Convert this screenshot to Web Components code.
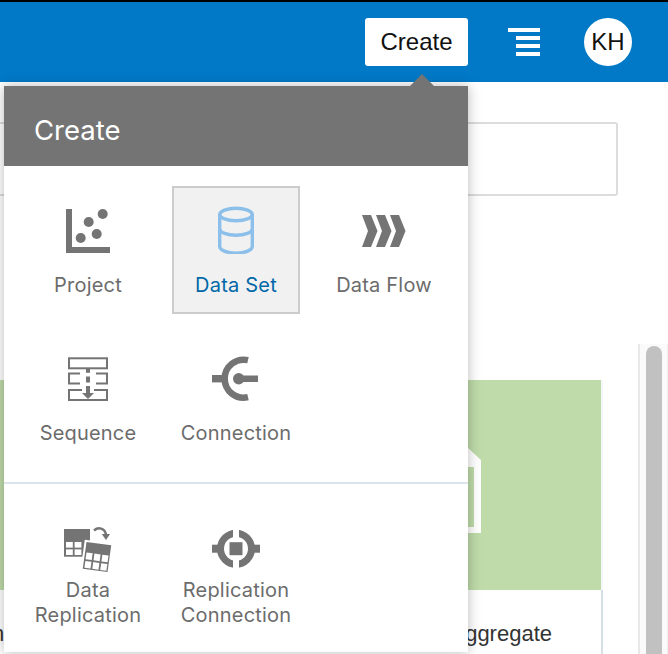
<!DOCTYPE html>
<html>
<head>
<meta charset="utf-8">
<title>Create menu</title>
<style>
    html, body { margin: 0; height: 100%; overflow: hidden; background: #fff; }
</style>
</head>
<body>
<app-shell>
    <top-bar slot="bar"></top-bar>
    <search-box></search-box>
    <card-row>
        <item-card name="n" class="first"></item-card>
        <item-card name="Aggregate" doc></item-card>
    </card-row>
    <create-menu slot="menu">
        <menu-section>
            <menu-tile label="Project">
                <svg viewBox="0 0 48 48" fill="#747474">
                    <rect x="2" y="3" width="6" height="44"/><rect x="2" y="41" width="44" height="6"/>
                    <circle cx="38.7" cy="8" r="5"/><circle cx="24.7" cy="16" r="5"/>
                    <circle cx="32.7" cy="28" r="5"/><circle cx="16.7" cy="32" r="5"/>
                </svg>
            </menu-tile>
            <menu-tile label="Data Set" selected>
                <svg viewBox="0 0 48 48" fill="none" stroke="#8cc0ea" stroke-width="3.4">
                    <ellipse cx="24" cy="8.5" rx="16.3" ry="6.3"/>
                    <path d="M7.7 8.5V40.5C7.7 44 15 47.2 24 47.2S40.3 44 40.3 40.5V8.5"/>
                    <path d="M7.7 23C7.7 26.5 15 29.2 24 29.2S40.3 26.5 40.3 23"/>
                </svg>
            </menu-tile>
            <menu-tile label="Data Flow">
                <svg viewBox="0 0 48 48" fill="#747474">
                    <path d="M2 9H11L17.5 25 11 41H2L8 25Z"/>
                    <path d="M16 9H25L31.5 25 25 41H16L22 25Z"/>
                    <path d="M30 9H39L45.5 25 39 41H30L36 25Z"/>
                </svg>
            </menu-tile>
            <menu-tile label="Sequence">
                <svg viewBox="0 0 48 48" fill="none" stroke="#747474" stroke-width="2">
                    <rect x="5" y="4.3" width="38" height="10"/>
                    <path d="M16 19.5H5V29.5H16M32 19.5H43V29.5H32"/>
                    <path d="M18 36H5V46H43V36H30"/>
                    <g fill="#747474" stroke="none">
                        <rect x="22" y="14.3" width="4" height="4.5"/>
                        <rect x="22" y="22.5" width="4" height="6"/>
                        <rect x="22" y="32" width="4" height="8"/>
                        <path d="M18 39H30L24 45Z"/>
                    </g>
                </svg>
            </menu-tile>
            <menu-tile label="Connection">
                <svg viewBox="0 0 48 48" fill="#747474">
                    <path d="M36 6.2A19 19 0 1 0 36 43.2" fill="none" stroke="#747474" stroke-width="6.5"/>
                    <rect x="0" y="21" width="10" height="7.4"/>
                    <circle cx="26.7" cy="24.7" r="5.7"/>
                    <rect x="26.7" y="21.5" width="19.3" height="6.5"/>
                </svg>
            </menu-tile>
        </menu-section>
        <menu-section divided>
            <menu-tile label="Data Replication" tight>
                <svg viewBox="0 0 48 48">
                    <rect x="0" y="4" width="26" height="27.7" fill="#747474"/>
                    <g fill="#fff">
                        <rect x="2" y="17" width="6.8" height="5.6"/><rect x="10.6" y="17" width="6.8" height="5.6"/>
                        <rect x="2" y="24.4" width="6.8" height="5.6"/><rect x="10.6" y="24.4" width="6.8" height="5.6"/>
                    </g>
                    <g transform="rotate(8 33 32)">
                        <rect x="19.5" y="17.5" width="27" height="29" fill="#747474" stroke="#fff" stroke-width="2"/>
                        <g fill="#fff">
                            <rect x="22" y="29" width="6.2" height="6.8"/><rect x="30" y="29" width="6.2" height="6.8"/><rect x="38" y="29" width="6.2" height="6.8"/>
                            <rect x="22" y="37.5" width="6.2" height="6.8"/><rect x="30" y="37.5" width="6.2" height="6.8"/><rect x="38" y="37.5" width="6.2" height="6.8"/>
                        </g>
                    </g>
                    <path d="M30 5.5C34 2 41 2.5 42 10" fill="none" stroke="#747474" stroke-width="2.5"/>
                    <path d="M37.7 9H46L42 15Z" fill="#747474"/>
                </svg>
            </menu-tile>
            <menu-tile label="Replication Connection" tight>
                <svg viewBox="0 0 48 48" fill="#747474">
                    <circle cx="24" cy="23.7" r="15.5" fill="none" stroke="#747474" stroke-width="7"/>
                    <rect x="21" y="3" width="6" height="10" fill="#fff"/>
                    <rect x="21" y="34.4" width="6" height="10" fill="#fff"/>
                    <rect x="0" y="19.7" width="6" height="8"/><rect x="42" y="19.7" width="6" height="8"/>
                    <rect x="17.5" y="17.2" width="13" height="13"/>
                </svg>
            </menu-tile>
        </menu-section>
    </create-menu>
</app-shell>

<script>
const shellTemplate = document.createElement('template');
shellTemplate.innerHTML = `
    <style>
        :host { display: flex; flex-direction: column; position: relative; height: 100vh; overflow: hidden; }
        .body { flex: 1; display: flex; min-height: 0; }
        .content { flex: 1; min-width: 0; display: flex; flex-direction: column; }
        .track { width: 30px; box-sizing: border-box; margin-top: 262px; padding: 2px 0 0 6px;
            background: #fafafa; border-left: 2px solid #e8e8e8; border-right: 1px solid #efefef; }
        .thumb { width: 16px; height: 100%; background: #c1c1c1; border-radius: 8px 8px 0 0; }
    </style>
    <slot name="bar"></slot>
    <div class="body">
        <div class="content"><slot></slot></div>
        <div class="track"><div class="thumb"></div></div>
    </div>
    <slot name="menu"></slot>
`;
class AppShell extends HTMLElement {
    constructor() {
        super();
        this.attachShadow({mode:'open'});
        this.shadowRoot.appendChild(shellTemplate.content.cloneNode(true));
    }
}

const barTemplate = document.createElement('template');
barTemplate.innerHTML = `
    <style>
        :host { display: flex; align-items: center; justify-content: flex-end; box-sizing: border-box;
            height: 82px; padding-right: 36px; background: #0179c7; border-top: 2px solid #000;
            font-family: "Liberation Sans", sans-serif; font-size: 24px; color: #111; }
        .create { display: flex; align-items: center; justify-content: center; width: 103px; height: 48px;
            background: #fff; border-radius: 3px; }
        .lines { width: 32px; margin: 0 44px 0 40px; display: flex; flex-direction: column; align-items: flex-end; gap: 4px; }
        .lines i { display: block; width: 24px; height: 4px; background: #fff; }
        .lines i:first-child { width: 32px; }
        .avatar { display: flex; align-items: center; justify-content: center; width: 48px; height: 48px;
            background: #fff; border-radius: 50%; }
    </style>
    <div class="create">Create</div>
    <div class="lines"><i></i><i></i><i></i><i></i></div>
    <div class="avatar">KH</div>
`;
class TopBar extends HTMLElement {
    constructor() {
        super();
        this.attachShadow({mode:'open'});
        this.shadowRoot.appendChild(barTemplate.content.cloneNode(true));
    }
}

const searchTemplate = document.createElement('template');
searchTemplate.innerHTML = `
    <style>
        :host { display: block; box-sizing: border-box; height: 74px; margin: 40px 20px 0 0;
            border: 2px solid #dcdcdc; border-left: 0; border-radius: 0 3px 3px 0; }
    </style>
`;
class SearchBox extends HTMLElement {
    constructor() {
        super();
        this.attachShadow({mode:'open'});
        this.shadowRoot.appendChild(searchTemplate.content.cloneNode(true));
    }
}

const rowTemplate = document.createElement('template');
rowTemplate.innerHTML = `
    <style>
        :host { display: grid; grid-template-columns: 1fr 293px; gap: 20px; margin: 184px 35px 0 0; }
    </style>
    <slot></slot>
`;
class CardRow extends HTMLElement {
    constructor() {
        super();
        this.attachShadow({mode:'open'});
        this.shadowRoot.appendChild(rowTemplate.content.cloneNode(true));
    }
}

const cardTemplate = document.createElement('template');
cardTemplate.innerHTML = `
    <style>
        :host { display: block; font-family: "Liberation Sans", sans-serif; font-size: 22px; color: #333; }
        .art { display: flex; justify-content: flex-end; box-sizing: border-box; height: 210px;
            padding: 68px 120px 0 0; background: #bedba9; border-right: 2px solid #f4f6f8; }
        .name { box-sizing: border-box; height: 64px; padding: 30px 49px 0 0; text-align: right;
            white-space: nowrap; line-height: 28px; border-right: 2px solid #d5dfe6; }
        :host(.first) .name { padding: 30px 0 0 0; margin-left: -8px; text-align: left; border-right: 0; }
        svg { display: none; }
        :host([doc]) svg { display: block; }
    </style>
    <div class="art">
        <svg width="50" height="85" viewBox="0 0 50 85">
            <path fill="#fff" fill-rule="evenodd" d="M0 0H37L50 12V85H0ZM7 19V79H43V19Z"/>
        </svg>
    </div>
    <div class="name"></div>
`;
class ItemCard extends HTMLElement {
    constructor() {
        super();
        this.attachShadow({mode:'open'});
        this.shadowRoot.appendChild(cardTemplate.content.cloneNode(true));
        this.shadowRoot.querySelector('.name').textContent = this.getAttribute('name');
    }
}

const menuTemplate = document.createElement('template');
menuTemplate.innerHTML = `
    <style>
        :host { position: absolute; left: 4px; top: 86px; width: 464px; background: #fff;
            box-shadow: 0 0 12px rgba(0, 0, 0, .28); }
        header { position: relative; box-sizing: border-box; height: 80px; padding: 26px 0 0 30px;
            background: #747474; color: #fff; font-family: Inter, sans-serif; font-size: 27.5px; line-height: 36px; }
        header::before { content: ""; position: absolute; left: 406px; top: -12px; width: 24px; height: 12px;
            background: #747474; clip-path: polygon(50% 0, 100% 100%, 0 100%); }
    </style>
    <header>Create</header>
    <slot></slot>
`;
class CreateMenu extends HTMLElement {
    constructor() {
        super();
        this.attachShadow({mode:'open'});
        this.shadowRoot.appendChild(menuTemplate.content.cloneNode(true));
    }
}

const sectionTemplate = document.createElement('template');
sectionTemplate.innerHTML = `
    <style>
        :host { display: grid; grid-template-columns: repeat(3, 128px); gap: 20px; padding: 20px; }
        :host([divided]) { padding: 21px 20px 19px; border-top: 2px solid #dbe4ea; }
    </style>
    <slot></slot>
`;
class MenuSection extends HTMLElement {
    constructor() {
        super();
        this.attachShadow({mode:'open'});
        this.shadowRoot.appendChild(sectionTemplate.content.cloneNode(true));
    }
}

const tileTemplate = document.createElement('template');
tileTemplate.innerHTML = `
    <style>
        :host { display: flex; flex-direction: column; align-items: center; box-sizing: border-box;
            height: 128px; padding-top: 18px; border: 2px solid transparent;
            font-family: Inter, sans-serif; font-size: 20px; letter-spacing: .2px; line-height: 25px;
            color: #6c6c6c; text-align: center; }
        :host([selected]) { background: #f1f1f1; border-color: #cccccc; color: #0068a8; }
        ::slotted(svg) { display: block; width: 48px; height: 48px; flex: none; }
        .label { margin-top: 18.5px; }
        :host([tight]) .label { margin-top: 4.5px; }
    </style>
    <slot></slot>
    <div class="label"></div>
`;
class MenuTile extends HTMLElement {
    constructor() {
        super();
        this.attachShadow({mode:'open'});
        this.shadowRoot.appendChild(tileTemplate.content.cloneNode(true));
        this.shadowRoot.querySelector('.label').textContent = this.getAttribute('label');
    }
}

window.customElements.define('app-shell', AppShell);
window.customElements.define('top-bar', TopBar);
window.customElements.define('search-box', SearchBox);
window.customElements.define('card-row', CardRow);
window.customElements.define('item-card', ItemCard);
window.customElements.define('create-menu', CreateMenu);
window.customElements.define('menu-section', MenuSection);
window.customElements.define('menu-tile', MenuTile);
</script>
</body>
</html>
